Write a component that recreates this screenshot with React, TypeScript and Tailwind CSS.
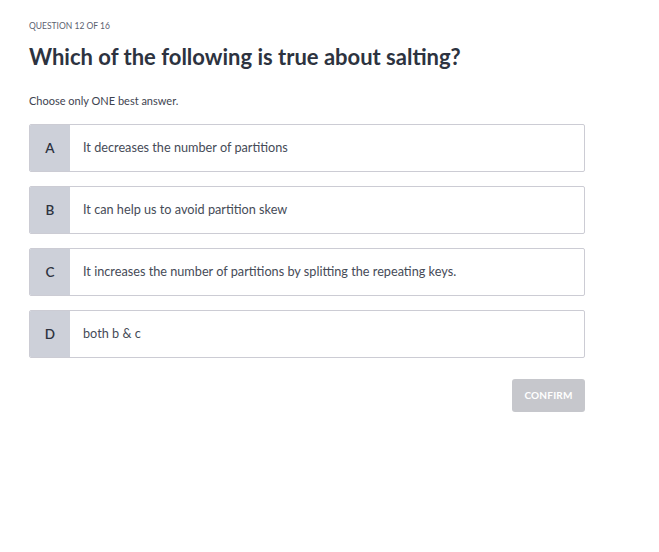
const options = [
  { key: 'A', text: 'It decreases the number of partitions' },
  { key: 'B', text: 'It can help us to avoid partition skew' },
  { key: 'C', text: 'It increases the number of partitions by splitting the repeating keys.' },
  { key: 'D', text: 'both b & c' },
]

export default function App() {
  return (
    <div className="min-h-screen bg-white font-['Lato',sans-serif] text-[#2f3542]">
      <div className="w-[556px] ml-[29px] pt-[20px]">
        <p className="text-[8.5px] leading-[12px] text-[#5b6170]">QUESTION 12 OF 16</p>
        <h1 className="mt-[10px] text-[22px] leading-[30px] font-bold text-[#2d3340]">
          Which of the following is true about salting?
        </h1>
        <p className="mt-[22px] text-[11px] leading-[14px] text-[#3e4350]">Choose only ONE best answer.</p>

        <div className="mt-[16px] flex flex-col gap-[14px]">
          {options.map((o) => (
            <div key={o.key} className="flex h-[48px] border border-[#ccccd4] rounded-[2px] overflow-hidden">
              <div className="w-[40px] shrink-0 bg-[#cdd0d9] flex items-center justify-center text-[13.5px] font-semibold text-[#2d3340]">
                {o.key}
              </div>
              <div className="flex items-center pl-[13px] text-[12.7px] text-[#464b57]">{o.text}</div>
            </div>
          ))}
        </div>

        <div className="mt-[21px] flex justify-end">
          <button
            type="button"
            className="w-[73px] h-[33px] rounded-[3px] bg-[#c6c7cc] text-white text-[10px] font-bold tracking-[0.02em]"
          >
            CONFIRM
          </button>
        </div>
      </div>
    </div>
  )
}
